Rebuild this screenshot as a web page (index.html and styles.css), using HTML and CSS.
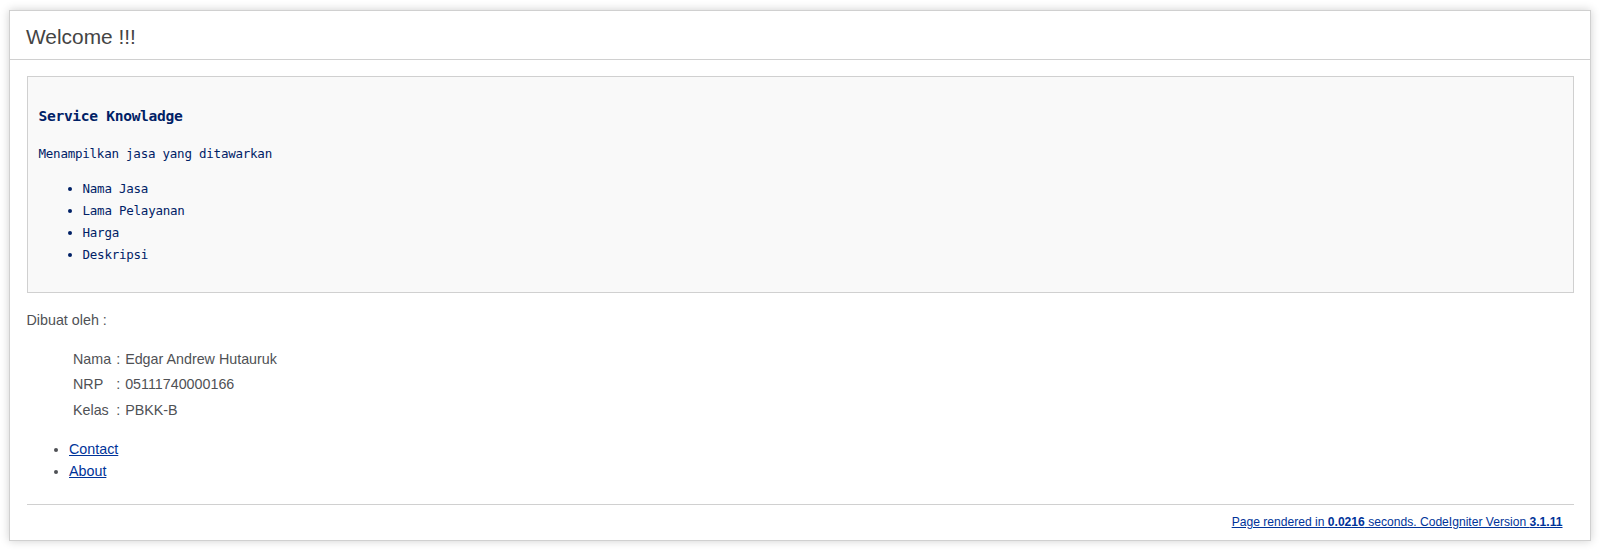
FILE: index.html
```
<!DOCTYPE html>
<html lang="en">
<head>
    <meta charset="UTF-8">
    <meta name="viewport" content="width=device-width, initial-scale=1.0">
    <title>Welcome !!!</title>
    <link rel="stylesheet" href="styles.css">
</head>
<body>
    <div class="container">
        <h1 class="title">Welcome !!!</h1>

        <div class="content">
            <code class="service">
                <h3 class="service-title">Service Knowladge</h3>
                <p>Menampilkan jasa yang ditawarkan</p>
                <ul>
                    <li>Nama Jasa</li>
                    <li>Lama Pelayanan</li>
                    <li>Harga</li>
                    <li>Deskripsi</li>
                </ul>
            </code>

            <p>Dibuat oleh :</p>

            <table class="author">
                <tr>
                    <td>Nama</td>
                    <td>:</td>
                    <td>Edgar Andrew Hutauruk</td>
                </tr>
                <tr>
                    <td>NRP</td>
                    <td>:</td>
                    <td>05111740000166</td>
                </tr>
                <tr>
                    <td>Kelas</td>
                    <td>:</td>
                    <td>PBKK-B</td>
                </tr>
            </table>

            <ul class="links">
                <li><a href="#">Contact</a></li>
                <li><a href="#">About</a></li>
            </ul>

            <p class="footer"><a href="#">Page rendered in <strong>0.0216</strong> seconds. CodeIgniter Version <strong>3.1.11</strong></a></p>
        </div>
    </div>
</body>
</html>
```

FILE: styles.css
```
::selection {
    background-color: #E13300;
    color: white;
}
body {
    background-color: #fff;
    margin: 0;
    font: 14.3px/22px "Liberation Sans", Arial, Helvetica, sans-serif;
    color: #4F5155;
}
a {
    color: #003399;
    background-color: transparent;
    font-weight: normal;
}
.container {
    margin: 10px 9px;
    border: 1px solid #D0D0D0;
    box-shadow: 0 0 8.8px #D0D0D0;
}
.title {
    color: #444;
    border-bottom: 1px solid #D0D0D0;
    font-size: 20.9px;
    font-weight: normal;
    line-height: 22px;
    margin: 0 0 15.4px 0;
    padding: 15.4px 16.5px 11px 16px;
}
.content {
    margin: 0 16.5px;
}
.content p {
    margin: 14.3px 0;
}
.service {
    font-family: "DejaVu Sans Mono", Consolas, Monaco, "Liberation Mono", monospace;
    font-size: 12.5px;
    letter-spacing: -0.23px;
    background-color: #f9f9f9;
    border: 1px solid #D0D0D0;
    color: #002166;
    display: block;
    margin: 15.4px 0;
    padding: 13.2px 11px;
}
.service-title {
    font-size: 14.6px;
    letter-spacing: -0.32px;
    font-weight: bold;
    margin: 15.4px 0;
}
.service p {
    margin: 13.2px 0;
}
.service ul {
    margin: 13.2px 0;
    padding-left: 44px;
}
.author {
    margin: 16px 0 16px 43px;
    border-spacing: 2px 0;
    font: inherit;
    color: inherit;
}
.author td {
    padding: 1.6px 1.5px;
}
.links {
    margin: 14.3px 0;
    padding-left: 42.5px;
}
.content .footer {
    text-align: right;
    font-size: 12.1px;
    border-top: 1px solid #D0D0D0;
    line-height: 35.2px;
    padding: 0 11px;
    margin: 22px 0 0 0;
}
```
